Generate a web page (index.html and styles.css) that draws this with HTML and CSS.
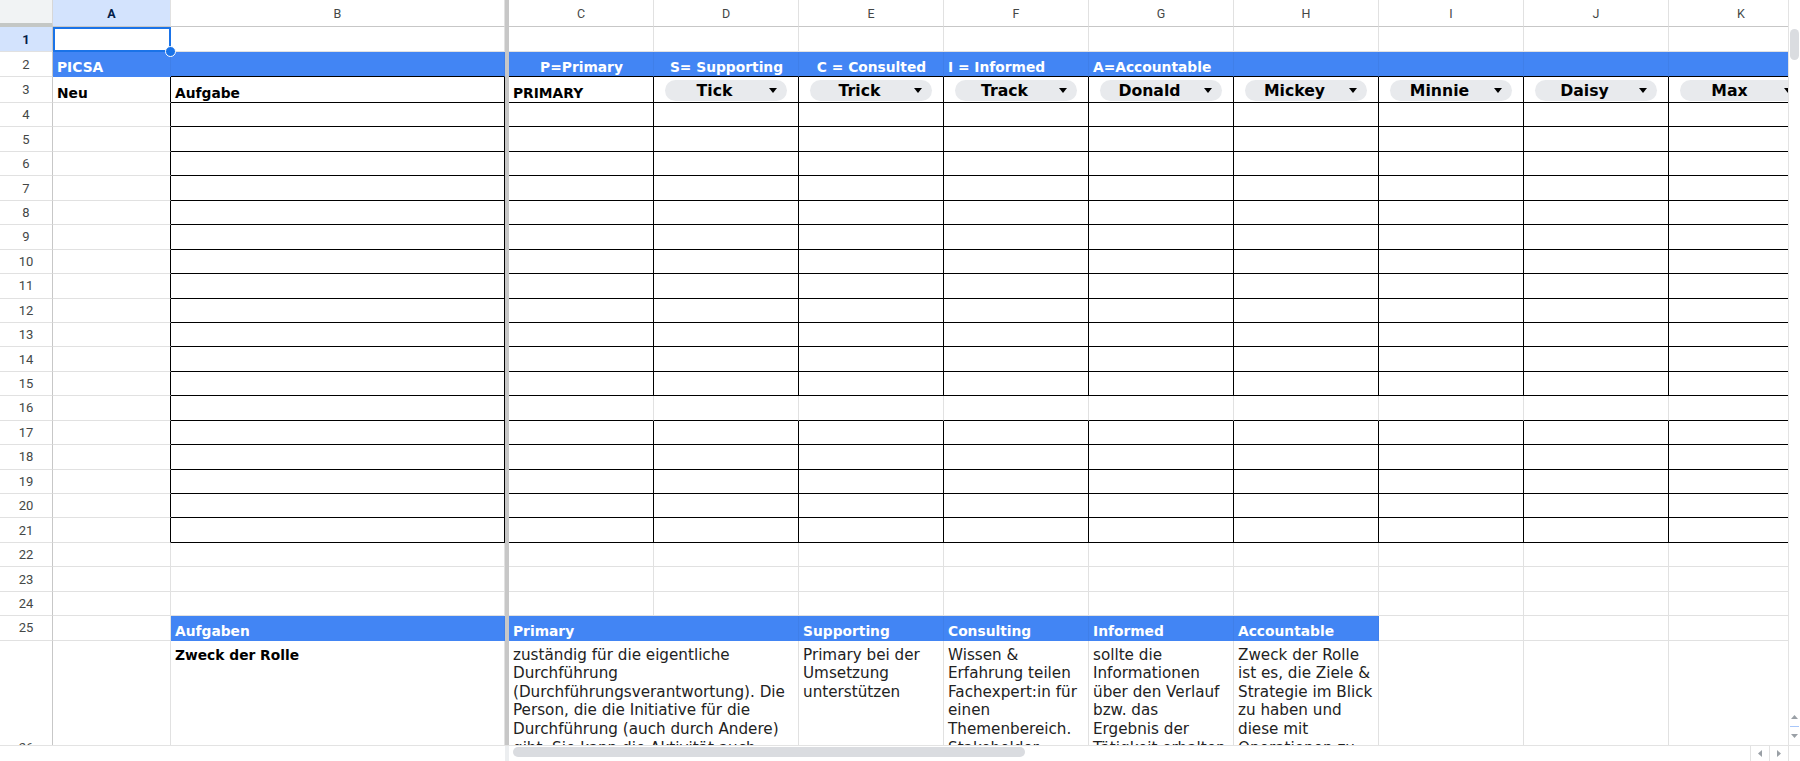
FILE: index.html
```html
<!DOCTYPE html>
<html>
  <head>
    <title>PICSA</title>
    <link rel="stylesheet" href="styles.css">
  </head>
  <body>
    <div class="app">
      <div class="grid-view">
        <!-- column letters -->
        <div class="row head-row">
          <div class="corner-cell"></div>
          <div class="col-head selected">A</div>
          <div class="col-head">B</div>
          <div class="freeze"></div>
          <div class="col-head">C</div>
          <div class="col-head">D</div>
          <div class="col-head">E</div>
          <div class="col-head">F</div>
          <div class="col-head">G</div>
          <div class="col-head">H</div>
          <div class="col-head">I</div>
          <div class="col-head">J</div>
          <div class="col-head">K</div>
        </div>

        <div class="row r1">
          <div class="row-head selected">1</div>
          <div class="cell active"></div>
          <div class="cell"></div>
          <div class="freeze"></div>
          <div class="cell"></div>
          <div class="cell"></div>
          <div class="cell"></div>
          <div class="cell"></div>
          <div class="cell"></div>
          <div class="cell"></div>
          <div class="cell"></div>
          <div class="cell"></div>
          <div class="cell"></div>
        </div>

        <div class="row r2">
          <div class="row-head">2</div>
          <div class="cell blue">PICSA</div>
          <div class="cell blue edge-b"></div>
          <div class="freeze"></div>
          <div class="cell blue edge-b center">P=Primary</div>
          <div class="cell blue edge-b center">S= Supporting</div>
          <div class="cell blue edge-b center">C = Consulted</div>
          <div class="cell blue edge-b">I = Informed</div>
          <div class="cell blue edge-b">A=Accountable</div>
          <div class="cell blue edge-b"></div>
          <div class="cell blue edge-b"></div>
          <div class="cell blue edge-b"></div>
          <div class="cell blue edge-b"></div>
        </div>

        <div class="row r3">
          <div class="row-head">3</div>
          <div class="cell bold edge-r">Neu</div>
          <div class="cell bold boxed">Aufgabe</div>
          <div class="freeze"></div>
          <div class="cell bold boxed">PRIMARY</div>
          <div class="cell boxed pick"><span class="chip"><span class="chip-name">Tick</span><span class="chip-arrow"></span></span></div>
          <div class="cell boxed pick"><span class="chip"><span class="chip-name">Trick</span><span class="chip-arrow"></span></span></div>
          <div class="cell boxed pick"><span class="chip"><span class="chip-name">Track</span><span class="chip-arrow"></span></span></div>
          <div class="cell boxed pick"><span class="chip"><span class="chip-name">Donald</span><span class="chip-arrow"></span></span></div>
          <div class="cell boxed pick"><span class="chip"><span class="chip-name">Mickey</span><span class="chip-arrow"></span></span></div>
          <div class="cell boxed pick"><span class="chip"><span class="chip-name">Minnie</span><span class="chip-arrow"></span></span></div>
          <div class="cell boxed pick"><span class="chip"><span class="chip-name">Daisy</span><span class="chip-arrow"></span></span></div>
          <div class="cell boxed pick"><span class="chip"><span class="chip-name">Max</span><span class="chip-arrow"></span></span></div>
        </div>

        <!-- rows 4 to 24 are filled in by the script below -->
        <div id="rows"></div>

        <div class="row r25">
          <div class="row-head">25</div>
          <div class="cell"></div>
          <div class="cell blue">Aufgaben</div>
          <div class="freeze"></div>
          <div class="cell blue span2">Primary</div>
          <div class="cell blue">Supporting</div>
          <div class="cell blue">Consulting</div>
          <div class="cell blue">Informed</div>
          <div class="cell blue">Accountable</div>
          <div class="cell"></div>
          <div class="cell"></div>
          <div class="cell"></div>
        </div>

        <div class="row r26">
          <div class="row-head">26</div>
          <div class="cell"></div>
          <div class="cell bold">Zweck der Rolle</div>
          <div class="freeze"></div>
          <div class="cell span2">zuständig für die eigentliche<br>Durchführung<br>(Durchführungsverantwortung). Die<br>Person, die die Initiative für die<br>Durchführung (auch durch Andere)<br>gibt. Sie kann die Aktivität auch</div>
          <div class="cell">Primary bei der<br>Umsetzung<br>unterstützen</div>
          <div class="cell">Wissen &amp;<br>Erfahrung teilen<br>Fachexpert:in für<br>einen<br>Themenbereich.<br>Stakeholder</div>
          <div class="cell">sollte die<br>Informationen<br>über den Verlauf<br>bzw. das<br>Ergebnis der<br>Tätigkeit erhalten</div>
          <div class="cell">Zweck der Rolle<br>ist es, die Ziele &amp;<br>Strategie im Blick<br>zu haben und<br>diese mit<br>Operationen zu</div>
          <div class="cell"></div>
          <div class="cell"></div>
          <div class="cell"></div>
        </div>
      </div>

      <div class="vscroll">
        <div class="v-thumb"></div>
        <div class="v-space"></div>
        <div class="s-btn"><svg width="7" height="4" viewBox="0 0 7 4"><polygon points="0,4 7,4 3.5,0" /></svg></div>
        <div class="v-mark"></div>
        <div class="s-btn"><svg width="7" height="4" viewBox="0 0 7 4"><polygon points="0,0 7,0 3.5,4" /></svg></div>
      </div>

      <div class="hscroll">
        <div class="h-frozen"></div>
        <div class="h-track"><div class="h-thumb"></div></div>
        <div class="s-btn h-btn"><svg width="4" height="7" viewBox="0 0 4 7"><polygon points="4,0 4,7 0,3.5" /></svg></div>
        <div class="s-btn h-btn"><svg width="4" height="7" viewBox="0 0 4 7"><polygon points="0,0 0,7 4,3.5" /></svg></div>
      </div>
      <div class="scroll-corner"></div>
    </div>

    <script>
      // empty task grid: rows 4-21 carry the black table borders
      const rowsBox = document.getElementById("rows");

      for (let n = 4; n <= 24; n++) {
        const inTable = n <= 21;
        let html = '<div class="row-head">' + n + "</div>";
        html += '<div class="cell' + (inTable ? " edge-r" : "") + '"></div>';
        html += '<div class="cell' + (inTable ? " boxed" : "") + '"></div>';
        html += '<div class="freeze"></div>';

        for (let c = 0; c < 9; c++) {
          let cls = "cell";
          if (inTable) {
            cls += n === 16 ? " boxed open" : " boxed";
          }
          html += '<div class="' + cls + '"></div>';
        }

        const row = document.createElement("div");
        row.className = "row";
        row.innerHTML = html;
        rowsBox.appendChild(row);
      }
    </script>
  </body>
</html>
```

FILE: styles.css
```css
body {
  margin: 0;
  background: #fff;
  font-family: "DejaVu Sans", sans-serif;
  color: #000;
}

.app {
  display: grid;
  grid-template-columns: 1788px 12px;
  grid-template-rows: 745px 16px;
  width: 1800px;
  height: 761px;
  overflow: hidden;
}

.grid-view {
  overflow: hidden;
}

/* one spreadsheet row: row number, A, B, freeze bar, C..K */
.row {
  display: grid;
  grid-template-columns: 53px 118px 334px 4px repeat(9, 145px);
  height: 24.45px;
}

.head-row {
  height: 27px;
}

.r1 {
  height: 25px;
}

.r2 {
  height: 25px;
}

.r3 {
  height: 26px;
}

.r26 {
  height: 214px;
}

.corner-cell {
  background: #f1f3f4;
  border-right: 1px solid #d7d7d7;
  border-bottom: 4px solid #c4c7c5;
}

.col-head {
  display: flex;
  align-items: center;
  justify-content: center;
  font-family: Roboto, sans-serif;
  font-size: 12.5px;
  color: #444746;
  border-right: 1px solid #e1e1e1;
  border-bottom: 1px solid #c7c7c7;
}

.row-head {
  display: flex;
  align-items: center;
  justify-content: center;
  font-family: Roboto, sans-serif;
  font-size: 13px;
  color: #444746;
  border-right: 1px solid #c7c7c7;
  border-bottom: 1px solid #e1e1e1;
}

.selected {
  background: #d3e3fd;
  color: #041e49;
  font-weight: 700;
}

.freeze {
  background: #c7c7c7;
}

.cell {
  box-sizing: border-box;
  display: flex;
  align-items: flex-end;
  padding: 0 3px 1px 4px;
  font-size: 13.8px;
  line-height: 16px;
  white-space: nowrap;
  overflow: hidden;
  border-right: 1px solid #e1e1e1;
  border-bottom: 1px solid #e1e1e1;
}

.span2 {
  grid-column: span 2;
}

.bold {
  font-weight: 700;
}

.center {
  justify-content: center;
}

.blue {
  background: #4285f4;
  color: #fff;
  font-weight: 700;
  border-right-color: #3f7fe9;
  border-bottom-color: #4285f4;
}

/* black table borders */
.boxed {
  border-right-color: #000;
  border-bottom-color: #000;
}

.edge-r {
  border-right-color: #000;
}

.edge-b {
  border-bottom-color: #000;
}

.open {
  border-right-color: #e1e1e1;
}

/* selected cell A1 with its fill handle */
.active {
  position: relative;
  z-index: 2;
  overflow: visible;
}

.active::after {
  content: "";
  position: absolute;
  left: 0;
  top: 0;
  right: -1px;
  bottom: -1px;
  border: 2px solid #1a73e8;
}

.active::before {
  content: "";
  position: absolute;
  right: -6px;
  bottom: -6px;
  width: 9px;
  height: 9px;
  border: 1px solid #fff;
  border-radius: 50%;
  background: #1a73e8;
  z-index: 3;
}

/* dropdown chips in row 3 */
.pick {
  align-items: stretch;
  padding: 3px 11px 1px 11px;
}

.chip {
  flex: 1;
  display: flex;
  align-items: center;
  height: 21px;
  border-radius: 11px;
  background: #e8eaed;
}

.chip-name {
  flex: 1;
  text-align: center;
  font-weight: 700;
  font-size: 15.7px;
}

.chip-arrow {
  width: 0;
  height: 0;
  margin: 0 10px 0 5px;
  border-left: 4px solid transparent;
  border-right: 4px solid transparent;
  border-top: 5px solid #000;
}

.r26 .cell {
  align-items: flex-start;
  padding-top: 5px;
  font-size: 15.2px;
  line-height: 18.6px;
  color: #222;
}

.r26 .cell.bold {
  font-size: 13.8px;
  color: #000;
}

.r26 .row-head {
  align-items: center;
}

/* scrollbars */
.vscroll {
  display: flex;
  flex-direction: column;
  border-left: 1px solid #e3e3e3;
}

.v-thumb {
  width: 9px;
  height: 31px;
  margin: 29px 0 0 1px;
  border-radius: 5px;
  background: #dadce0;
}

.v-space {
  flex: 1;
}

.s-btn {
  display: flex;
  align-items: center;
  justify-content: center;
  height: 18px;
  fill: #9aa0a6;
}

.v-mark {
  height: 1px;
  margin: 0 1px;
  background: #a8c7fa;
}

.hscroll {
  display: flex;
  border-top: 1px solid #e3e3e3;
}

.h-frozen {
  width: 505px;
  border-right: 4px solid #eceef0;
}

.h-track {
  flex: 1;
  padding: 1px 0 0 4px;
}

.h-thumb {
  width: 512px;
  height: 10px;
  border-radius: 5px;
  background: #dadce0;
}

.h-btn {
  width: 18px;
  height: 15px;
  border-left: 1px solid #e3e3e3;
}

.scroll-corner {
  border-left: 1px solid #e3e3e3;
  border-top: 1px solid #e3e3e3;
}
```
